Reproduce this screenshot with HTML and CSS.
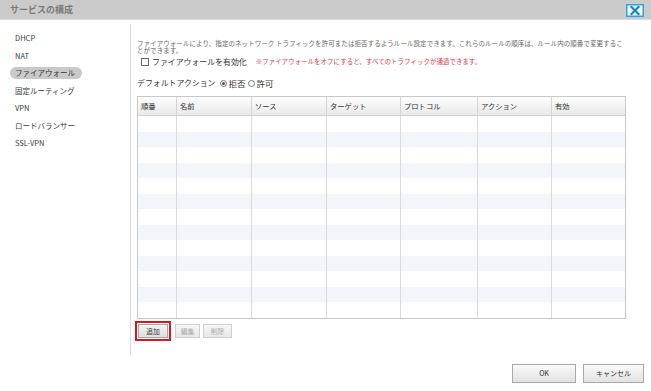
FILE: index.html
```html
<!DOCTYPE html>
<html lang="ja">
<head>
<meta charset="utf-8">
<link rel="stylesheet" href="styles.css">
</head>
<body>
<div class="dialog">
  <div class="titlebar">
    <span class="title">サービスの構成</span>
    <span class="close">
      <svg width="18" height="13" viewBox="0 0 18 13">
        <rect x="0.75" y="0.75" width="16.5" height="11.5" fill="#eef8fd" stroke="#2aa5e0" stroke-width="1.5"/>
        <path d="M5.5 3 L12.5 10 M12.5 3 L5.5 10" stroke="#1784cc" stroke-width="2.2" stroke-linecap="square"/>
      </svg>
    </span>
  </div>
  <div class="main">
    <ul class="sidebar">
      <li class="item">DHCP</li>
      <li class="item">NAT</li>
      <li class="item"><span class="pill">ファイアウォール</span></li>
      <li class="item">固定ルーティング</li>
      <li class="item">VPN</li>
      <li class="item">ロードバランサー</li>
      <li class="item">SSL-VPN</li>
    </ul>
    <div class="content">
      <p class="desc">ファイアウォールにより、指定のネットワーク トラフィックを許可または拒否するようルール設定できます。これらのルールの順序は、ルール内の順番で変更することができます。</p>
      <div class="enable-row">
        <span class="checkbox"></span>
        <span class="enable-label">ファイアウォールを有効化</span>
        <span class="warn">※ファイアウォールをオフにすると、すべてのトラフィックが通過できます。</span>
      </div>
      <div class="action-row">
        <span class="action-label">デフォルトアクション</span>
        <span class="radio checked"></span><span class="radio-label">拒否</span>
        <span class="radio"></span><span class="radio-label">許可</span>
      </div>
      <div class="table">
        <div class="thead">
          <div class="th c1">順番</div>
          <div class="th c2">名前</div>
          <div class="th c3">ソース</div>
          <div class="th c4">ターゲット</div>
          <div class="th c5">プロトコル</div>
          <div class="th c6">アクション</div>
          <div class="th c7">有効</div>
        </div>
        <div class="tbody">
          <div class="tr"><div></div><div></div><div></div><div></div><div></div><div></div><div></div></div>
          <div class="tr"><div></div><div></div><div></div><div></div><div></div><div></div><div></div></div>
          <div class="tr"><div></div><div></div><div></div><div></div><div></div><div></div><div></div></div>
          <div class="tr"><div></div><div></div><div></div><div></div><div></div><div></div><div></div></div>
          <div class="tr"><div></div><div></div><div></div><div></div><div></div><div></div><div></div></div>
          <div class="tr"><div></div><div></div><div></div><div></div><div></div><div></div><div></div></div>
          <div class="tr"><div></div><div></div><div></div><div></div><div></div><div></div><div></div></div>
          <div class="tr"><div></div><div></div><div></div><div></div><div></div><div></div><div></div></div>
          <div class="tr"><div></div><div></div><div></div><div></div><div></div><div></div><div></div></div>
          <div class="tr"><div></div><div></div><div></div><div></div><div></div><div></div><div></div></div>
          <div class="tr"><div></div><div></div><div></div><div></div><div></div><div></div><div></div></div>
          <div class="tr"><div></div><div></div><div></div><div></div><div></div><div></div><div></div></div>
          <div class="tr"><div></div><div></div><div></div><div></div><div></div><div></div><div></div></div>
        </div>
      </div>
      <div class="btn-row">
        <button class="btn add">追加</button>
        <button class="btn edit disabled">編集</button>
        <button class="btn del disabled">削除</button>
      </div>
    </div>
  </div>
  <div class="footer">
    <button class="fbtn ok">OK</button>
    <button class="fbtn cancel">キャンセル</button>
  </div>
</div>
</body>
</html>
```

FILE: styles.css
```css
* { box-sizing: border-box; }
html, body { margin: 0; padding: 0; background: #fff; }
body {
  width: 651px;
  height: 391px;
  overflow: hidden;
  font-family: "Noto Sans CJK JP", "Noto Sans", sans-serif;
  color: #333;
}
.dialog { width: 651px; height: 391px; }

.titlebar {
  height: 20px;
  background: #cbcbcb;
  border-bottom: 1px solid #dedede;
  display: flex;
  align-items: center;
  justify-content: space-between;
  padding: 0 7px 0 10px;
}
.title {
  font-size: 9px;
  font-weight: bold;
  color: #7a7a7a;
  line-height: 12px;
}
.close { display: flex; margin-top: 1px; }

.main {
  display: flex;
  margin-top: 4px;
  height: 331px;
}
.sidebar {
  list-style: none;
  margin: 0;
  padding: 5px 0 0 0;
  width: 131px;
  border-right: 1px solid #dcdcdc;
}
.item {
  height: 17.5px;
  line-height: 17.5px;
  font-size: 7.5px;
  padding-left: 15px;
  color: #3a3a3a;
}
.pill {
  display: inline-block;
  margin-left: -5px;
  padding: 0 7px 0 5px;
  height: 12px;
  line-height: 12px;
  border-radius: 6px;
  background: #c9c9c9;
  color: #333;
}

.content {
  padding-left: 6px;
  width: 495px;
}
.desc {
  margin: 16px 0 0 0;
  font-size: 6.5px;
  letter-spacing: 0.06px;
  line-height: 7px;
  color: #666;
  width: 489px;
}
.enable-row {
  display: flex;
  align-items: center;
  margin-top: 3px;
  height: 10px;
}
.checkbox {
  width: 8px;
  height: 8px;
  border: 1px solid #666;
  background: #fff;
  margin-left: 4px;
  margin-right: 3px;
}
.enable-label {
  font-size: 7.9px;
  line-height: 10px;
  color: #333;
}
.warn {
  font-size: 6.4px;
  letter-spacing: 0.1px;
  line-height: 10px;
  color: #e8323c;
  margin-left: 9px;
}
.action-row {
  display: flex;
  align-items: center;
  margin-top: 11px;
  height: 10px;
}
.action-label {
  font-size: 7.9px;
  line-height: 10px;
  margin-right: 4px;
}
.radio {
  width: 7px;
  height: 7px;
  border: 1px solid #777;
  border-radius: 50%;
  background: #fff;
  margin-right: 2px;
  position: relative;
}
.radio.checked::after {
  content: "";
  position: absolute;
  left: 1px; top: 1px;
  width: 3px; height: 3px;
  border-radius: 50%;
  background: #555;
}
.radio-label {
  font-size: 8.5px;
  line-height: 10px;
  margin-right: 2px;
}

.table {
  margin-top: 8px;
  width: 489px;
  border: 1px solid #c8c8c8;
}
.thead, .tr {
  display: grid;
  grid-template-columns: 39px 75px 75px 74px 77px 74px 73px;
}
.thead {
  height: 19px;
  background: linear-gradient(#fdfdfd, #e9e9e9);
  border-bottom: 1px solid #cfcfcf;
}
.th {
  font-size: 7.3px;
  line-height: 18px;
  padding-left: 3px;
  border-right: 1px solid #d4d4d4;
  color: #333;
}
.th.c7 { border-right: none; }
.tr { height: 15.5px; }
.tr:nth-child(even) { background: #f2f5fa; }
.tr > div { border-right: 1px solid #dadada; }
.tr > div:last-child { border-right: none; }

.btn-row {
  display: flex;
  margin-top: 5px;
  padding-left: 1px;
}
.btn {
  height: 14px;
  padding: 0;
  font-family: inherit;
  font-size: 6.8px;
  line-height: 12px;
  border: 1px solid #a8a8a8;
  background: linear-gradient(#f4f4f4, #dedede);
  color: #333;
  margin-right: 5px;
}
.btn.add {
  width: 30px;
  outline: 2.5px solid #e0141e;
  outline-offset: 1.5px;
  margin-right: 7px;
}
.btn.edit { width: 25px; margin-right: 3px; }
.btn.del { width: 29px; }
.btn.disabled {
  color: #a9a9a9;
  border-color: #cfcfcf;
  background: linear-gradient(#f6f6f6, #e8e8e8);
}

.footer {
  display: flex;
  justify-content: flex-end;
  padding: 9px 7px 0 0;
}
.fbtn {
  height: 19px;
  padding: 0;
  font-family: inherit;
  font-size: 7px;
  line-height: 17px;
  border: 1px solid #a9a9a9;
  background: linear-gradient(#fafafa, #e2e2e2);
  color: #333;
}
.fbtn.ok { width: 64px; margin-right: 7px; }
.fbtn.cancel { width: 61px; }
```
